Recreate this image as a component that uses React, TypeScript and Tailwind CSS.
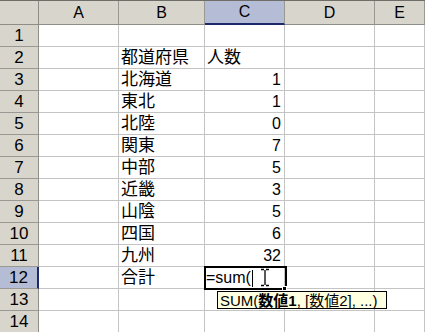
import React from "react";

const colWidths = "grid-cols-[39px_80px_86px_80px_90px_1fr]";

const rows: { b?: string; c?: string; cLeft?: boolean }[] = [
  {},
  { b: "都道府県", c: "人数", cLeft: true },
  { b: "北海道", c: "1" },
  { b: "東北", c: "1" },
  { b: "北陸", c: "0" },
  { b: "関東", c: "7" },
  { b: "中部", c: "5" },
  { b: "近畿", c: "3" },
  { b: "山陰", c: "5" },
  { b: "四国", c: "6" },
  { b: "九州", c: "32" },
  { b: "合計" },
  {},
  {},
];

const font = { fontFamily: '"Liberation Sans", "Noto Sans CJK JP", sans-serif' };

const ColHeader = ({ label, active }: { label: string; active?: boolean }) => (
  <div
    className={
      "flex items-center justify-center border-r border-[#9a9892] text-[16px] leading-none " +
      (active ? "bg-[#b5bdd6] border-b-2 border-b-[#1c2a6a]" : "bg-[#d8d5cd] border-b border-b-[#8f8d88]")
    }
  >
    {label}
  </div>
);

const RowHeader = ({ n, active }: { n: number; active?: boolean }) => (
  <div
    className={
      "flex items-end justify-center pb-[2px] border-b border-[#9a9892] text-[17px] leading-none " +
      (active ? "bg-[#b5bdd6] border-r-2 border-r-[#1c2a6a]" : "bg-[#d8d5cd] border-r border-r-[#8f8d88]")
    }
  >
    {n}
  </div>
);

const Cell = ({ children, right, cjk, className = "" }: { children?: React.ReactNode; right?: boolean; cjk?: boolean; className?: string }) => (
  <div
    className={
      "flex items-end px-[2px] pb-[2px] border-r border-b border-[#c4c4c4] leading-none whitespace-nowrap " +
      (right ? "justify-end pr-[3px] " : "justify-start ") +
      (cjk ? "text-[17px] " : "text-[16px] ") +
      className
    }
  >
    {children}
  </div>
);

// mouse pointer over the edited cell
const IBeam = () => (
  <svg width="10" height="19" viewBox="0 0 10 19" className="absolute left-[55px] top-[1px]">
    <path d="M1 1.5h3M6 1.5h3M5 2v15M1 17.5h3M6 17.5h3" stroke="#000" strokeWidth="1.3" fill="none" />
  </svg>
);

export default function App() {
  return (
    <div className="w-[425px] h-[332px] overflow-hidden bg-white text-black border-t border-[#6f6d68]" style={font}>
      <div className={`grid ${colWidths} grid-rows-[24px_repeat(14,22px)]`}>
        <div className="bg-[#d8d5cd] border-r border-b border-[#8f8d88]" />
        <ColHeader label="A" />
        <ColHeader label="B" />
        <ColHeader label="C" active />
        <ColHeader label="D" />
        <ColHeader label="E" />

        {rows.map((r, i) => {
          const n = i + 1;
          return (
            <React.Fragment key={n}>
              <RowHeader n={n} active={n === 12} />
              <Cell />
              <Cell cjk>{r.b}</Cell>
              {n === 12 ? (
                <div className="relative border-r border-b border-[#c4c4c4]">
                  <div className="absolute -left-[1px] -top-[1px] w-[83px] h-[24px] border-2 border-black" />
                  <div className="absolute -right-[3px] -bottom-[3px] w-[5px] h-[5px] bg-black border border-white" />
                  <div className="absolute left-[1px] bottom-[2px] flex items-end text-[16px] leading-none">
                    <span>=sum(</span>
                    <span className="ml-[1px] mb-[-1px] w-[1px] h-[17px] bg-black" />
                  </div>
                  <IBeam />
                  <div className="absolute left-[12px] top-[24px] z-10 h-[18px] w-[170px] px-[2px] flex items-center bg-[#ffffe1] border border-black text-[15px] leading-none whitespace-nowrap">
                    <span>SUM(</span>
                    <span className="font-bold">数値1</span>
                    <span>, [数値2], ...)</span>
                  </div>
                </div>
              ) : (
                <Cell right={!r.cLeft} cjk={r.cLeft}>
                  {r.c}
                </Cell>
              )}
              <Cell />
              <Cell />
            </React.Fragment>
          );
        })}
      </div>
    </div>
  );
}
